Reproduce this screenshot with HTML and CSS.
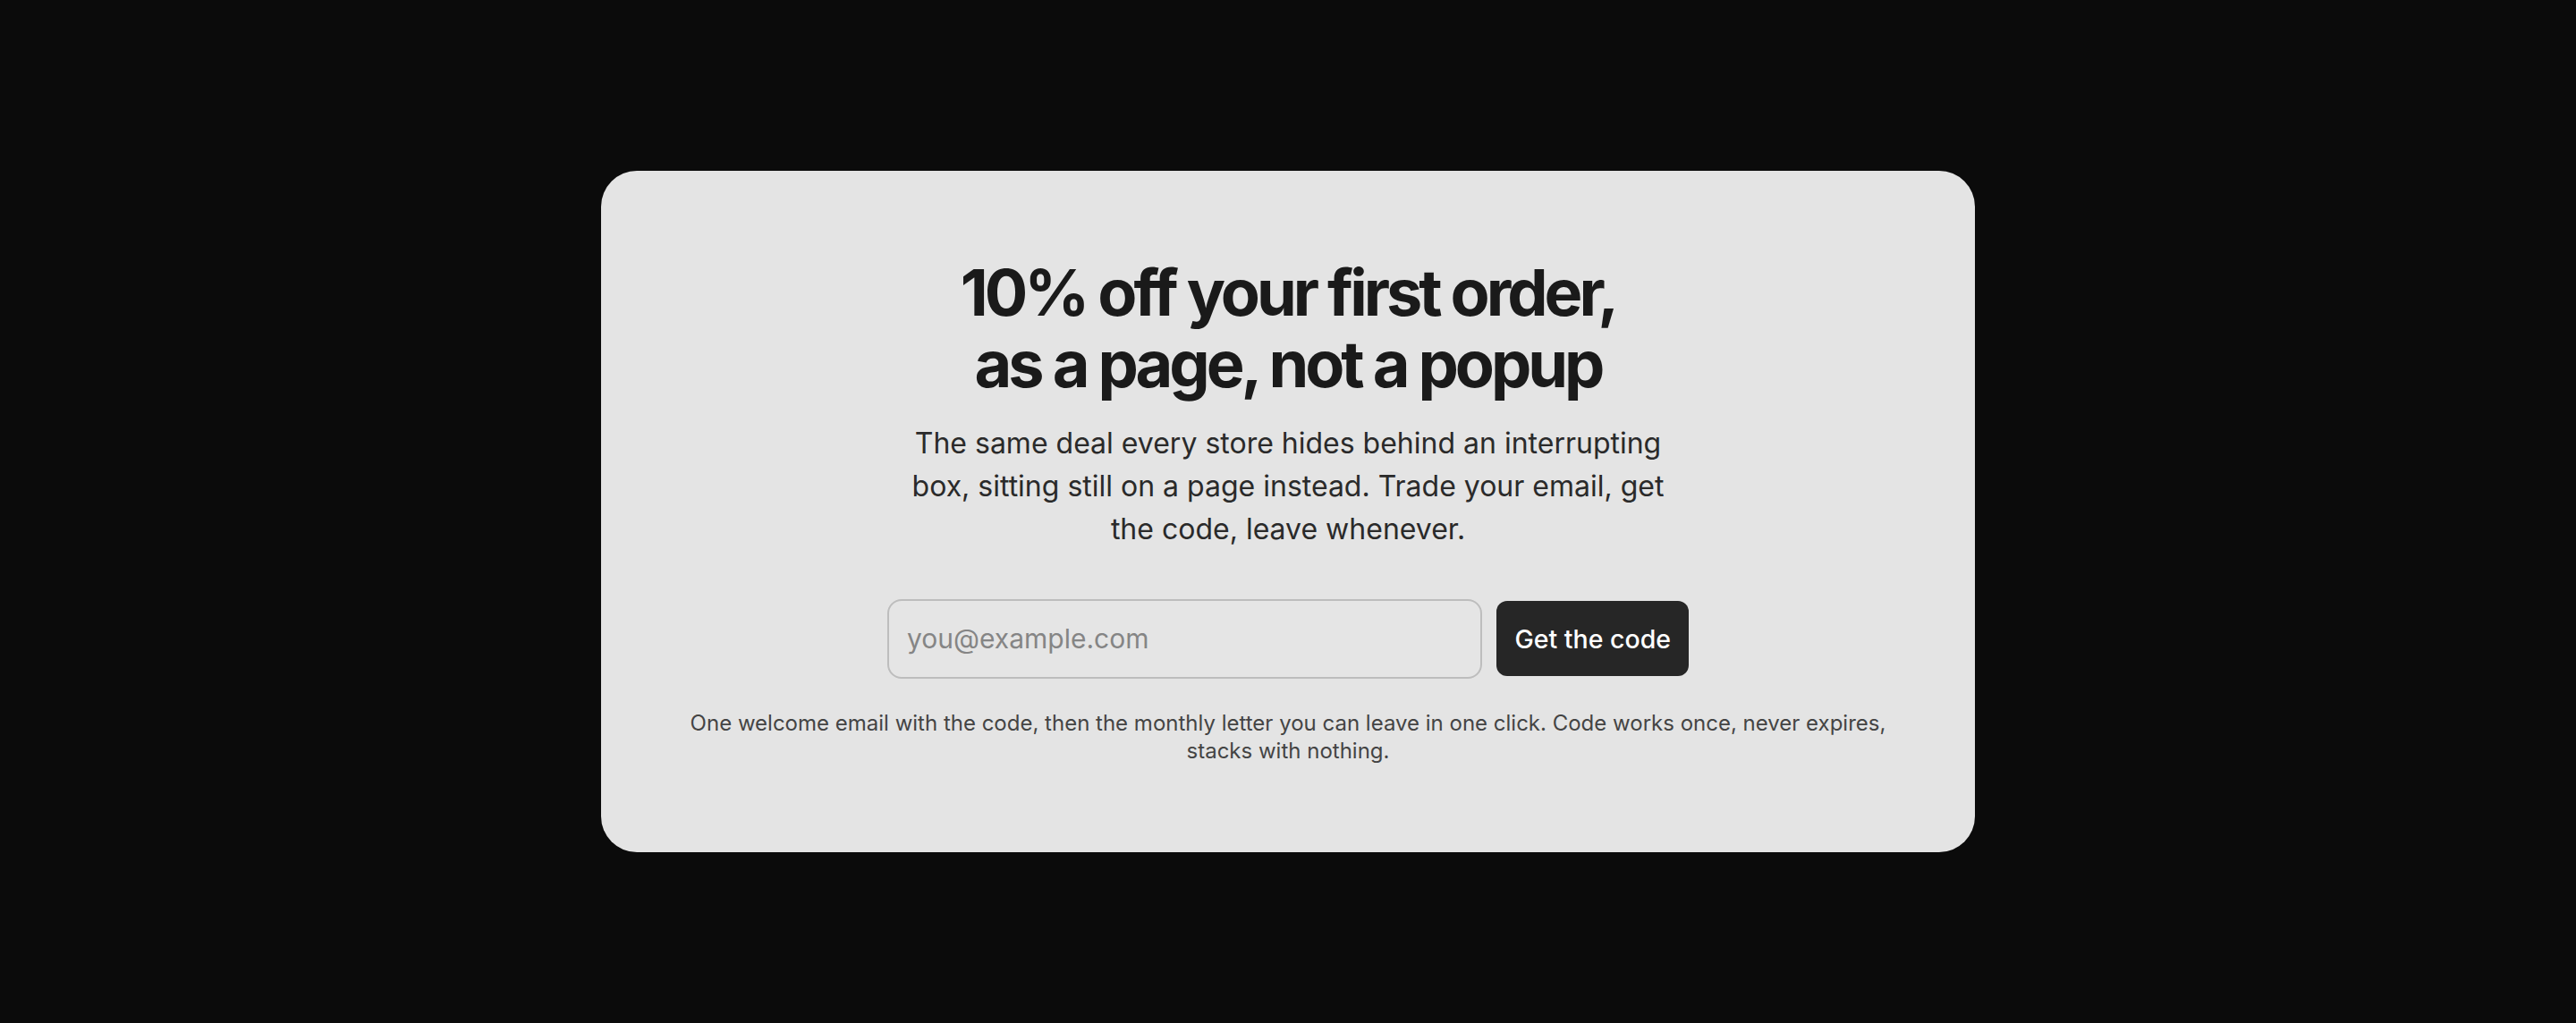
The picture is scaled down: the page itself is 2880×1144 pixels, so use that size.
FILE: index.html
```html
<!DOCTYPE html>
<html lang="en">
<head>
<meta charset="utf-8">
<title>10% off your first order</title>
<link rel="stylesheet" href="styles.css">
</head>
<body>
<main class="page">
  <section class="card">
    <h1 class="title">10% off your first order,<br>as a page, not a popup</h1>
    <p class="lede">The same deal every store hides behind an interrupting box, sitting still on a page instead. Trade your email, get the code, leave whenever.</p>
    <form class="signup" onsubmit="return false">
      <input class="email" type="email" placeholder="you@example.com">
      <button class="cta" type="submit">Get the code</button>
    </form>
    <p class="fine">One welcome email with the code, then the monthly letter you can leave in one click. Code works once, never expires, stacks with nothing.</p>
  </section>
</main>
</body>
</html>
```

FILE: styles.css
```css
* { box-sizing: border-box; }
html, body { margin: 0; padding: 0; }
body {
  background: #0b0b0b;
  font-family: Inter, "Noto Sans", "Liberation Sans", sans-serif;
  color: #1a1a1a;
}
.page {
  min-height: 1144px;
  display: flex;
  align-items: center;
  justify-content: center;
}
.card {
  width: 1536px;
  background: #e4e4e4;
  border-radius: 40px;
  padding: 96px 96px 98px;
  display: flex;
  flex-direction: column;
  align-items: center;
  text-align: center;
}
.title {
  margin: 0;
  font-size: 72px;
  line-height: 80.6px;
  font-weight: 700;
  letter-spacing: -0.056em;
  color: #1a1a1a;
}
.lede {
  margin: 24px 0 0;
  max-width: 860px;
  font-size: 32px;
  line-height: 48px;
  color: #2a2a2a;
}
.signup {
  margin: 54px 0 0;
  width: 896px;
  display: flex;
  align-items: center;
  gap: 16px;
}
.email {
  flex: 1;
  min-width: 0;
  height: 89px;
  padding: 0 20px;
  border: 2px solid #bdbdbd;
  border-radius: 16px;
  background: #e5e5e5;
  font-family: inherit;
  font-size: 30px;
  color: #1a1a1a;
  outline: none;
}
.email::placeholder { color: #858585; }
.cta {
  height: 84px;
  padding: 0 20px;
  border: 0;
  border-radius: 12px;
  background: #262626;
  color: #ffffff;
  font-family: inherit;
  font-size: 28.5px;
  font-weight: 500;
}
.fine {
  margin: 34px 0 0;
  font-size: 24px;
  line-height: 31.2px;
  color: #444444;
}
```
